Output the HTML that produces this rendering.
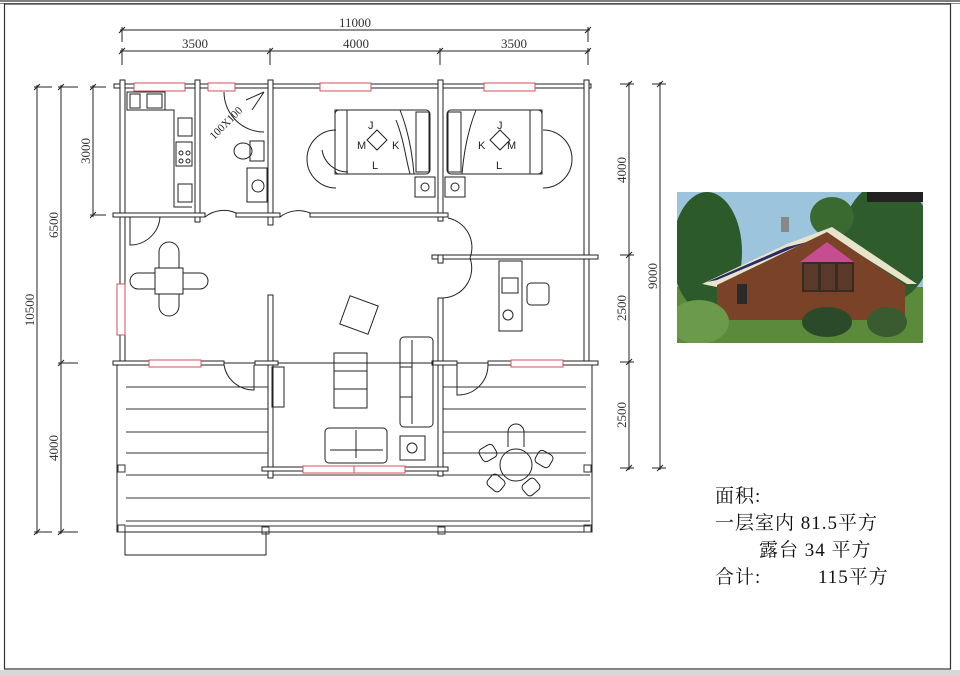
<!DOCTYPE html>
<html><head><meta charset="utf-8"><style>
html,body{margin:0;padding:0;background:#fff;width:960px;height:676px;overflow:hidden}
svg{display:block}
.t{font-family:"Liberation Serif","Noto Serif CJK SC",serif;fill:#333}
.c{font-family:"Liberation Serif","Noto Serif CJK SC",serif;fill:#111;font-size:19px;letter-spacing:1px}
</style></head><body>
<svg width="960" height="676" viewBox="0 0 960 676" xmlns="http://www.w3.org/2000/svg">
<rect x="0" y="670" width="960" height="6" fill="#d8d8d8"/>
<line x1="0" y1="1" x2="960" y2="1" stroke="#555" stroke-width="1.5"/>
<line x1="0" y1="3.5" x2="960" y2="3.5" stroke="#888" stroke-width="1"/>
<rect x="4.5" y="4" width="946" height="665" fill="none" stroke="#333" stroke-width="1.2"/>

<g stroke="#222" stroke-width="1" fill="none">
<line x1="120" y1="30" x2="590" y2="30"/><line x1="120" y1="51" x2="590" y2="51"/>
<line x1="122" y1="27" x2="122" y2="42"/><line x1="588" y1="27" x2="588" y2="42"/>
<line x1="122" y1="48" x2="122" y2="65"/><line x1="270" y1="48" x2="270" y2="65"/><line x1="440" y1="48" x2="440" y2="65"/><line x1="588" y1="48" x2="588" y2="65"/>
<path d="M119 33l6-6M585 33l6-6M119 54l6-6M267 54l6-6M437 54l6-6M585 54l6-6"/>
<line x1="37" y1="85" x2="37" y2="534"/><line x1="61" y1="85" x2="61" y2="534"/><line x1="93" y1="85" x2="93" y2="217"/>
<path d="M34 87h18M58 87h20M90 87h16M90 215h16M58 363h20M34 532h18M58 532h20M34 90l6-6M58 90l6-6M90 90l6-6M90 218l6-6M58 366l6-6M34 535l6-6M58 535l6-6"/>
<line x1="629" y1="82" x2="629" y2="470"/><line x1="660" y1="82" x2="660" y2="470"/>
<path d="M620 84h14M652 84h14M620 255h14M620 362h14M620 468h14M652 468h14M626 87l6-6M657 87l6-6M626 258l6-6M626 365l6-6M626 471l6-6M657 471l6-6"/>
</g>
<g class="t" font-size="13">
<text x="355" y="27" text-anchor="middle">11000</text>
<text x="195" y="48" text-anchor="middle">3500</text>
<text x="356" y="48" text-anchor="middle">4000</text>
<text x="514" y="48" text-anchor="middle">3500</text>
<text transform="translate(34 310) rotate(-90)" text-anchor="middle">10500</text>
<text transform="translate(58 225) rotate(-90)" text-anchor="middle">6500</text>
<text transform="translate(58 448) rotate(-90)" text-anchor="middle">4000</text>
<text transform="translate(90 151) rotate(-90)" text-anchor="middle">3000</text>
<text transform="translate(626 170) rotate(-90)" text-anchor="middle">4000</text>
<text transform="translate(626 308) rotate(-90)" text-anchor="middle">2500</text>
<text transform="translate(626 415) rotate(-90)" text-anchor="middle">2500</text>
<text transform="translate(657 276) rotate(-90)" text-anchor="middle">9000</text>
</g>

<g stroke="#222" stroke-width="1" fill="#fff">
<rect x="117" y="363" width="475" height="169"/>
<rect x="125" y="532" width="141" height="23"/>
<g fill="none" stroke="#333">
<path d="M126 387H268M126 409H268M126 432H268M126 453H268M126 475H590M126 498H590M126 521H590M126 526H590"/>
<path d="M442 387H586M442 409H586M442 432H586M442 453H586"/>
<rect x="118" y="465" width="7" height="7"/><rect x="118" y="525" width="7" height="7"/><rect x="262" y="527" width="7" height="7"/><rect x="438" y="527" width="7" height="7"/><rect x="584" y="465" width="7" height="7"/><rect x="584" y="525" width="7" height="7"/>
</g>
<rect x="114" y="84" width="477" height="4"/>
<rect x="120" y="80" width="5" height="285"/>
<rect x="584" y="80" width="5" height="285"/>
<rect x="195" y="80" width="5" height="142"/>
<rect x="268" y="80" width="5" height="145"/>
<rect x="438" y="80" width="5" height="141"/>
<rect x="113" y="213" width="92" height="4"/>
<rect x="236" y="213" width="44" height="4"/>
<rect x="310" y="213" width="138" height="4"/>
<rect x="432" y="255" width="166" height="4"/>
<rect x="438" y="255" width="5" height="8"/>
<rect x="438" y="298" width="5" height="178"/>
<rect x="268" y="295" width="5" height="183"/>
<rect x="113" y="361" width="111" height="4"/>
<rect x="255" y="361" width="23" height="4"/>
<rect x="432" y="361" width="25" height="4"/>
<rect x="488" y="361" width="110" height="4"/>
<rect x="262" y="467" width="186" height="4"/>
</g>
<g fill="#fff" stroke="#d0505a" stroke-width="1">
<rect x="134" y="83" width="51" height="8"/><rect x="208" y="83" width="27" height="8"/>
<rect x="320" y="83" width="51" height="8"/><rect x="484" y="83" width="51" height="8"/>
<rect x="117" y="284" width="8" height="51"/>
<rect x="149" y="360" width="52" height="7"/><rect x="511" y="360" width="52" height="7"/>
<rect x="303" y="466" width="51" height="7"/><rect x="354" y="466" width="51" height="7"/>
</g>
<g stroke="#222" stroke-width="1" fill="none">
<path d="M130 217V245A30 30 0 0 0 160 217"/>
<path d="M205 217A30 30 0 0 1 236 213"/>
<path d="M280 217A30 30 0 0 1 310 213"/>
<path d="M448 218A30 30 0 0 1 470 258"/>
<path d="M470 258A30 30 0 0 1 443 298"/>
<path d="M224 365A30 30 0 0 0 254 390V365"/>
<path d="M457 365V395A30 30 0 0 0 488 365"/>
<rect x="127" y="92" width="38" height="18"/><rect x="130" y="94" width="10" height="14"/><rect x="147" y="94" width="15" height="14"/>
<path d="M127 110H174V207H192"/>
<rect x="178" y="118" width="14" height="18"/><rect x="176" y="142" width="16" height="24"/><rect x="178" y="184" width="14" height="18"/>
<circle cx="181" cy="153" r="2"/><circle cx="188" cy="153" r="2"/><circle cx="181" cy="161" r="2"/><circle cx="188" cy="161" r="2"/>
<path d="M224 92A40 40 0 0 0 264 132"/><path d="M246 100l18-8M252 110l12-18"/>
<ellipse cx="243" cy="151" rx="9" ry="8"/><rect x="250" y="141" width="14" height="20"/>
<rect x="247" y="168" width="20" height="34"/><circle cx="258" cy="186" r="6"/>
<rect x="335" y="110" width="95" height="64" rx="4"/>
<rect x="335" y="110" width="12" height="64"/><rect x="416" y="112" width="13" height="60"/>
<path d="M400 110C408 130 412 150 414 174M396 120C404 140 406 160 410 174"/>
<path d="M377 130l10 10-10 10-10-10z"/>
<path d="M336 130A28 28 0 1 0 336 188M348 172A26 26 0 0 1 322 150"/>
<rect x="415" y="177" width="20" height="20"/><circle cx="425" cy="187" r="4"/>
<rect x="447" y="110" width="95" height="64" rx="4"/>
<rect x="530" y="110" width="12" height="64"/><rect x="448" y="112" width="13" height="60"/>
<path d="M476 110C468 130 464 150 462 174"/>
<path d="M500 130l10 10-10 10-10-10z"/>
<path d="M543 130A28 28 0 1 1 543 188"/>
<rect x="445" y="177" width="20" height="20"/><circle cx="455" cy="187" r="4"/>
<rect x="155" y="268" width="28" height="26"/>
<path d="M159 268V252A10 10 0 0 1 179 252V268M159 294V306A10 10 0 0 0 179 306V294M155 273H138A8 8 0 0 0 138 289H155M183 273H200A8 8 0 0 1 200 289H183"/>
<rect x="344" y="300" width="30" height="30" transform="rotate(20 359 315)"/>
<rect x="334" y="353" width="33" height="55"/><path d="M334 371H367M334 389H367"/>
<rect x="400" y="337" width="33" height="90" rx="4"/><path d="M412 340V424M400 367H412M400 397H412"/>
<rect x="325" y="428" width="62" height="35" rx="4"/><path d="M356 430V458M330 450H383"/>
<rect x="400" y="436" width="25" height="24"/><circle cx="412" cy="448" r="5"/>
<rect x="272" y="367" width="12" height="40"/>
<rect x="499" y="261" width="23" height="70"/><rect x="502" y="278" width="16" height="15"/><circle cx="508" cy="315" r="5"/>
<rect x="527" y="283" width="22" height="22" rx="4"/>
<circle cx="516" cy="465" r="16"/>
<path d="M508 447V432A8 8 0 0 1 524 432V447"/>
<rect x="480" y="446" width="16" height="14" rx="4" transform="rotate(-30 488 453)"/>
<rect x="536" y="452" width="16" height="14" rx="4" transform="rotate(30 544 459)"/>
<rect x="488" y="476" width="16" height="14" rx="4" transform="rotate(40 496 483)"/>
<rect x="523" y="480" width="16" height="14" rx="4" transform="rotate(-40 531 487)"/>
</g>
<g font-family="Liberation Sans,sans-serif" font-size="11" fill="#222">
<text x="368" y="129">J</text><text x="357" y="149">M</text><text x="392" y="149">K</text><text x="372" y="169">L</text>
<text x="497" y="129">J</text><text x="478" y="149">K</text><text x="507" y="149">M</text><text x="496" y="169">L</text>
<text transform="translate(214 140) rotate(-45)" font-family="Liberation Serif,serif">100X100</text>
</g>

<svg x="677" y="192" width="246" height="151" viewBox="0 0 246 151">
<rect width="246" height="151" fill="#9cc4dc"/>
<rect y="95" width="246" height="56" fill="#5b8a3a"/>
<ellipse cx="30" cy="60" rx="35" ry="60" fill="#2d5a2a"/>
<ellipse cx="210" cy="50" rx="45" ry="60" fill="#2f5c2c"/>
<ellipse cx="155" cy="25" rx="22" ry="20" fill="#3a6a30"/>
<polygon points="25,92 110,52 155,35 240,92 230,92 155,45 40,95" fill="#e8e4cc"/>
<polygon points="30,90 110,55 130,50 40,88" fill="#2a2a66"/>
<polygon points="40,93 150,40 228,93 228,128 40,128" fill="#7a4226"/>
<polygon points="123,70 150,50 177,70" fill="#c84c90"/>
<rect x="125" y="70" width="52" height="30" fill="#3a2a20"/>
<rect x="127" y="72" width="14" height="26" fill="#5a3a2a"/><rect x="144" y="72" width="14" height="26" fill="#5a3a2a"/><rect x="161" y="72" width="14" height="26" fill="#5a3a2a"/>
<rect x="104" y="25" width="8" height="15" fill="#888"/>
<rect x="60" y="92" width="10" height="20" fill="#2a2a2a"/>
<ellipse cx="22" cy="130" rx="30" ry="22" fill="#6a9a4a"/>
<ellipse cx="150" cy="130" rx="25" ry="15" fill="#2a4a2a"/>
<ellipse cx="210" cy="130" rx="20" ry="15" fill="#3a5a30"/>
<rect x="190" width="56" height="10" fill="#222"/>
</svg>

<text class="c" x="715" y="502">面积:</text>
<text class="c" x="715" y="529">一层室内 81.5平方</text>
<text class="c" x="759" y="556">露台 34 平方</text>
<text class="c" x="715" y="583">合计:</text>
<text class="c" x="818" y="583">115平方</text>
</svg>
</body></html>
